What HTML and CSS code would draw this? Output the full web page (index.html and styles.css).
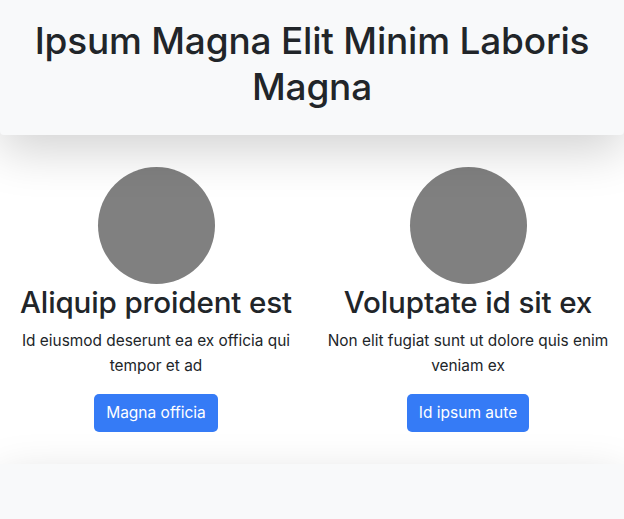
FILE: index.html
```html
<!DOCTYPE html>
<html lang="en">
<head>
<meta charset="utf-8">
<title>Ipsum Magna</title>
<link rel="stylesheet" href="styles.css">
</head>
<body>
<header class="hero">
  <h1 class="hero-title">Ipsum Magna Elit Minim Laboris Magna</h1>
</header>
<main class="features">
  <section class="feature">
    <div class="avatar"></div>
    <h2 class="feature-title">Aliquip proident est</h2>
    <p class="feature-text">Id eiusmod deserunt ea ex officia qui tempor et ad</p>
    <a class="btn" href="#">Magna officia</a>
  </section>
  <section class="feature">
    <div class="avatar"></div>
    <h2 class="feature-title">Voluptate id sit ex</h2>
    <p class="feature-text">Non elit fugiat sunt ut dolore quis enim veniam ex</p>
    <a class="btn" href="#">Id ipsum aute</a>
  </section>
</main>
<footer class="footer"></footer>
</body>
</html>
```

FILE: styles.css
```css
* { box-sizing: border-box; }

html, body {
  margin: 0;
  padding: 0;
}

body {
  font-family: Inter, "Noto Sans", "Liberation Sans", sans-serif;
  color: #212529;
  background: #ffffff;
  font-size: 16px;
  line-height: 1.5;
}

.hero {
  position: relative;
  z-index: 1;
  background: #f8f9fa;
  border-radius: 0 0 4px 4px;
  box-shadow: 0 16px 48px rgba(0, 0, 0, 0.175);
  padding: 18px 20px 25px;
  text-align: center;
}

.hero-title {
  margin: 0;
  font-size: 37px;
  font-weight: 500;
  line-height: 46px;
  letter-spacing: -0.2px;
}

.features {
  display: grid;
  grid-template-columns: 1fr 1fr;
  padding: 32px 0 32px;
  background: #ffffff;
}

.feature {
  display: flex;
  flex-direction: column;
  align-items: center;
  text-align: center;
  padding: 0 12px;
}

.avatar {
  width: 117px;
  height: 117px;
  border-radius: 50%;
  background: #808080;
}

.feature-title {
  margin: 0 0 8px;
  font-size: 29.6px;
  font-weight: 500;
  line-height: 36px;
  letter-spacing: -0.15px;
}

.feature-text {
  margin: 0 0 16px;
  font-size: 15.4px;
  line-height: 25px;
}

.btn {
  display: inline-block;
  padding: 6px 12px;
  font-size: 15.5px;
  line-height: 26px;
  color: #ffffff;
  background: #357bf6;
  border-radius: 5px;
  text-decoration: none;
}

.footer {
  position: relative;
  background: #f8f9fa;
  height: 80px;
  box-shadow: 0 16px 48px rgba(0, 0, 0, 0.175);
}
```
